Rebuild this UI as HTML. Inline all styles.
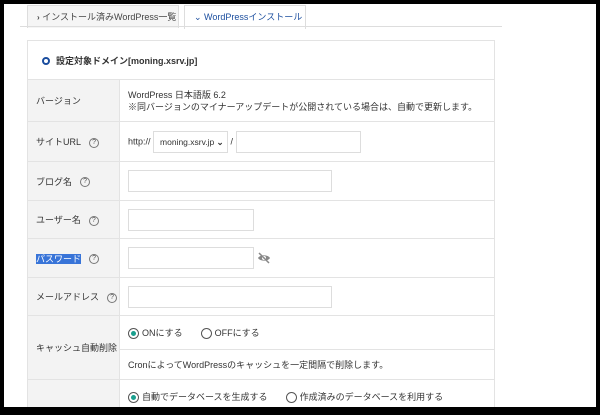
<!DOCTYPE html>
<html><head><meta charset="utf-8"><style>
*{box-sizing:border-box;margin:0;padding:0}
body{width:600px;height:415px;background:#000;position:relative;overflow:hidden;font-family:"Liberation Sans","Noto Sans CJK JP",sans-serif;font-size:9px;color:#333}
#pg{position:absolute;left:4px;top:4px;width:592px;height:403px;background:#fff;overflow:hidden}
.tab{position:absolute;top:1px;height:23px;border:1px solid #ddd;border-bottom:none;line-height:22px;font-size:9px;padding-left:9px;white-space:nowrap}
.line{position:absolute;left:16px;top:22px;width:482px;height:1px;background:#ddd}
table{position:absolute;left:23px;top:36px;width:468px;border-collapse:collapse}
td{border:1px solid #e3e3e3;vertical-align:middle;white-space:nowrap}
td.l{background:#f3f3f3;width:92px;padding-left:8px}
td.r{padding-left:8px}
.q{display:inline-block;width:10px;height:10px;border:1px solid #777;border-radius:50%;font-size:7px;line-height:8px;text-align:center;color:#555;margin-left:8px;vertical-align:middle}
.in{display:inline-block;height:22px;border:1px solid #ddd;vertical-align:middle}
.rad{display:inline-block;width:11px;height:11px;border:1px solid #555;border-radius:50%;vertical-align:middle;margin-right:3px;position:relative}
.rad.on::after{content:"";position:absolute;left:2px;top:2px;width:5px;height:5px;border-radius:50%;background:#1a9f8e}
</style></head><body><div id="pg">
<div class="tab" style="left:23px;width:152px;background:#f5f5f5;color:#444"><b style="font-size:8px">›</b> インストール済みWordPress一覧</div>
<div class="tab" style="left:180px;width:122px;background:#fff;color:#1a4d9e;height:24px">⌄ WordPressインストール</div>
<div class="line"></div>
<table>
<tr style="height:39px"><td colspan="2" style="padding-left:14px;font-weight:bold;font-size:9px"><span style="display:inline-block;width:8px;height:8px;border:2px solid #1a4d9e;border-radius:50%;vertical-align:middle;margin-right:6px"></span>設定対象ドメイン[moning.xsrv.jp]</td></tr>
<tr style="height:42px"><td class="l">バージョン</td><td class="r" style="line-height:12px">WordPress 日本語版 6.2<br>※同バージョンのマイナーアップデートが公開されている場合は、自動で更新します。</td></tr>
<tr style="height:40px"><td class="l">サイトURL<span class="q">?</span></td><td class="r">http:// <span class="in" style="width:75px;padding:5px 0 0 6px;white-space:nowrap;font-size:8.5px">moning.xsrv.jp <b>⌄</b></span> / <span class="in" style="width:125px"></span></td></tr>
<tr style="height:39px"><td class="l">ブログ名<span class="q">?</span></td><td class="r"><span class="in" style="width:204px"></span></td></tr>
<tr style="height:38px"><td class="l">ユーザー名<span class="q">?</span></td><td class="r"><span class="in" style="width:126px"></span></td></tr>
<tr style="height:39px"><td class="l"><span style="background:#3874d8;color:#fff">パスワード</span><span class="q">?</span></td><td class="r"><span class="in" style="width:126px"></span> <svg width="14" height="12" viewBox="0 0 14 12" style="vertical-align:middle"><path d="M1 6C3 2.5 11 2.5 13 6C11 9.5 3 9.5 1 6Z" fill="#888"/><circle cx="7" cy="6" r="2" fill="#fff"/><path d="M2 1L12 11" stroke="#888" stroke-width="1.5"/></svg></td></tr>
<tr style="height:38px"><td class="l">メールアドレス<span class="q">?</span></td><td class="r"><span class="in" style="width:204px"></span></td></tr>
<tr style="height:34px"><td class="l" rowspan="2">キャッシュ自動削除</td><td class="r"><span class="rad on"></span>ONにする　　<span class="rad"></span>OFFにする</td></tr>
<tr style="height:30px"><td class="r">CronによってWordPressのキャッシュを一定間隔で削除します。</td></tr>
<tr style="height:34px"><td class="l"></td><td class="r"><span class="rad on"></span>自動でデータベースを生成する　　<span class="rad"></span>作成済みのデータベースを利用する</td></tr>
</table>
</div></body></html>
